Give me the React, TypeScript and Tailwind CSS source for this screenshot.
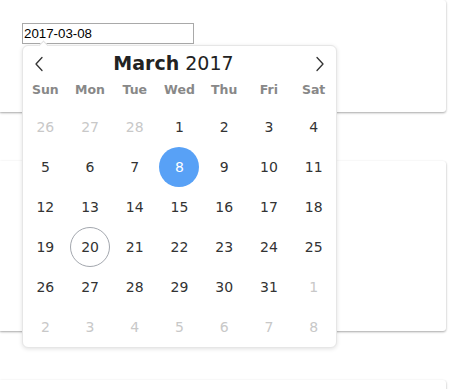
import React from 'react';

const WEEKDAYS = ['Sun', 'Mon', 'Tue', 'Wed', 'Thu', 'Fri', 'Sat'];

interface Day {
    n: number;
    muted?: boolean;
}

// March 2017 grid, padded with Feb and April days
const buildDays = (): Day[] => {
    const days: Day[] = [26, 27, 28].map(n => ({ n, muted: true }));
    for (let i = 1; i <= 31; i++) days.push({ n: i });
    for (let i = 1; i <= 8; i++) days.push({ n: i, muted: true });
    return days;
};

const Chevron = ({ dir }: { dir: 'left' | 'right' }) => (
    <svg width="10" height="16" viewBox="0 0 10 16" fill="none">
        <polyline
            points={dir === 'left' ? '8,1.5 2,8 8,14.5' : '2,1.5 8,8 2,14.5'}
            stroke="#333"
            strokeWidth="1.3"
            strokeLinecap="round"
            strokeLinejoin="round"
        />
    </svg>
);

function Calendar() {
    const days = buildDays();
    return (
        <div className="absolute left-0 top-[22px] z-10 w-[315px] rounded-[6px] border border-[#e6e6e6] bg-white shadow-[0_1px_4px_rgba(0,0,0,0.12)] font-['DejaVu_Sans',sans-serif]">
            <div className="absolute left-[17px] top-[-4px] h-[7px] w-[7px] rotate-45 border-l border-t border-[#e3e3e3] bg-white" />
            <div className="flex h-[34px] items-center justify-between px-[4px] pt-[1px]">
                <button className="flex h-6 w-6 items-center justify-center">
                    <Chevron dir="left" />
                </button>
                <div className="mr-[12px] text-[19px] leading-none text-[#222]">
                    <span className="font-bold">March</span> 2017
                </div>
                <button className="flex h-6 w-6 items-center justify-center">
                    <Chevron dir="right" />
                </button>
            </div>
            <div className="grid grid-cols-7 h-[20px] items-center">
                {WEEKDAYS.map(d => (
                    <div key={d} className="text-center text-[12.5px] font-bold text-[#888]">{d}</div>
                ))}
            </div>
            <div className="mt-[7px] grid grid-cols-7">
                {days.map((d, i) => {
                    const selected = !d.muted && d.n === 8;
                    const today = !d.muted && d.n === 20;
                    return (
                        <div key={i} className="flex h-[40px] items-center justify-center">
                            <span
                                className={
                                    'flex h-[40px] w-[40px] items-center justify-center rounded-full text-[14px] ' +
                                    (selected
                                        ? 'bg-[#58a1f6] text-white'
                                        : today
                                            ? 'border border-[#a3a7ae] text-[#333]'
                                            : d.muted
                                                ? 'text-[#c8c8c8]'
                                                : 'text-[#333]')
                                }
                            >
                                {d.n}
                            </span>
                        </div>
                    );
                })}
            </div>
        </div>
    );
}

const cardCls = 'w-[446px] rounded-r-[3px] bg-white shadow-[0_1px_3px_rgba(0,0,0,0.12),0_1px_2px_rgba(0,0,0,0.24)]';

export default function App() {
    return (
        <div className="h-[389px] w-[475px] overflow-hidden bg-white">
            <div className="flex flex-col gap-[49px]">
                <div className={cardCls + ' h-[112px] pl-[22px] pt-[23px]'}>
                    <div className="relative w-[172px]">
                        <input
                            readOnly
                            value="2017-03-08"
                            className="block h-[21px] w-[172px] border border-[#a9a9a9] px-[1px] text-[13.3px] text-black outline-none font-['Liberation_Sans',Arial,sans-serif]"
                        />
                        <Calendar />
                    </div>
                </div>
                <div className={cardCls + ' h-[170px]'} />
                <div className={cardCls + ' h-[170px]'} />
            </div>
        </div>
    );
}
